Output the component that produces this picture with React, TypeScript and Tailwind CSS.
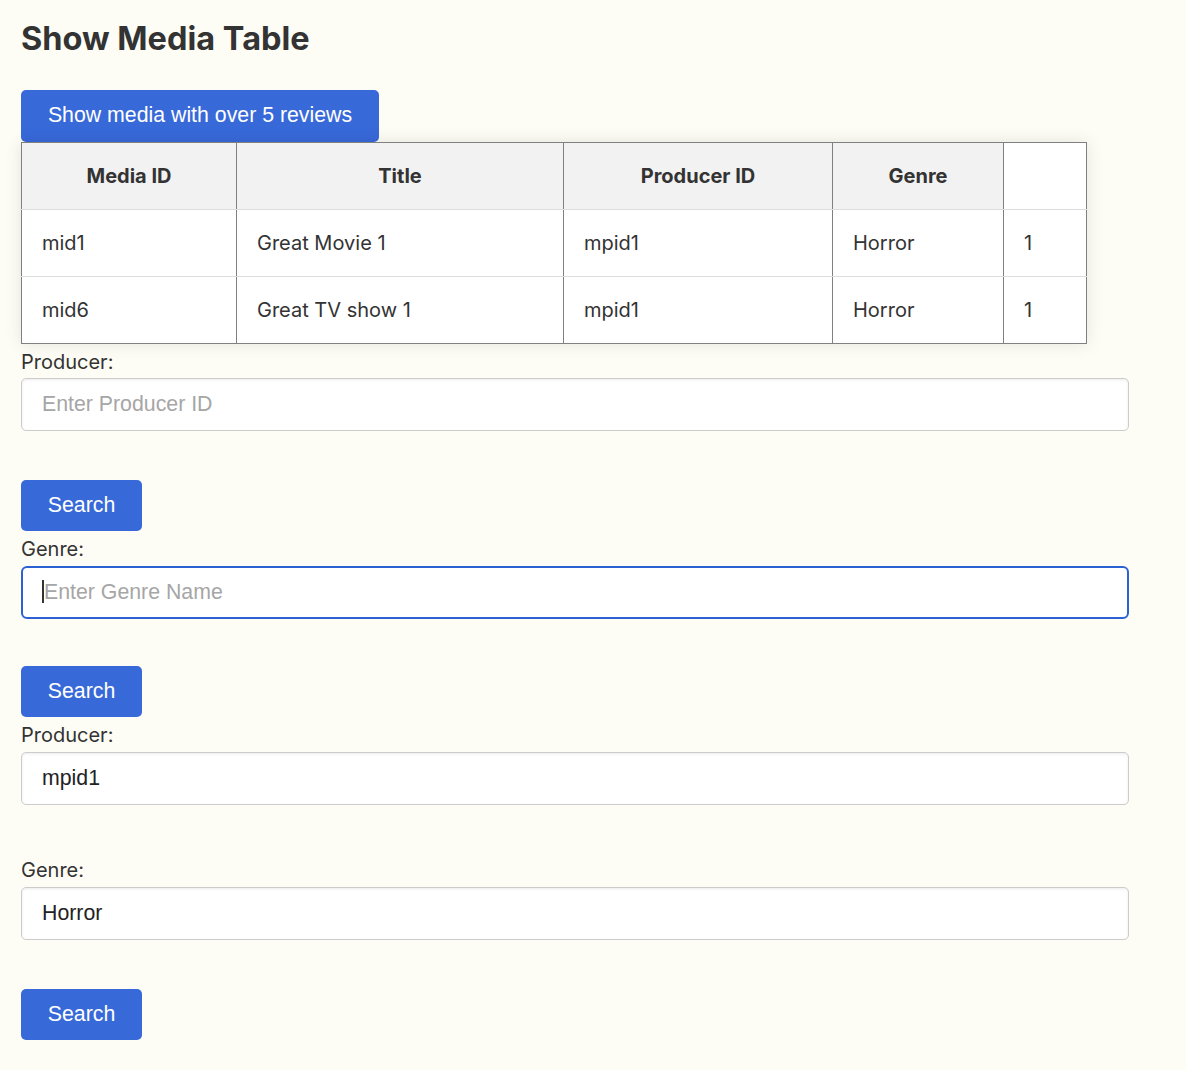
import React from "react";

const rows = [
  { id: "mid1", title: "Great Movie 1", pid: "mpid1", genre: "Horror", n: "1" },
  { id: "mid6", title: "Great TV show 1", pid: "mpid1", genre: "Horror", n: "1" },
];

const btn =
  "block rounded-[5px] bg-[#3869d9] text-white text-[21.3px] leading-none font-['Liberation_Sans',Arial,sans-serif]";
const inputCls =
  "block h-[53px] w-[1108px] rounded-[5px] border border-[#cccccc] bg-white px-[20px] text-[21.3px] text-[#222] font-['Liberation_Sans',Arial,sans-serif] shadow-[inset_0_1px_3px_rgba(0,0,0,0.08)] outline-none placeholder:text-[#a6a6a6]";
const labelCls = "block text-[20px] leading-6 text-[#333]";

export default function App() {
  return (
    <div className="min-h-screen bg-[#fdfdf5] px-[21px] pt-[19px] pb-[30px] font-['Inter',sans-serif] text-[#333]">
      <h1 className="text-[32.5px] font-bold leading-[39px] text-[#333]">Show Media Table</h1>
      <button className={`${btn} mt-[32px] h-[52px] w-[358px]`}>Show media with over 5 reviews</button>
      <table className="w-[1066px] border-collapse border border-[#808080] bg-white text-[20px] shadow-[0_0_16px_rgba(0,0,0,0.1)]">
        <thead>
          <tr>
            <th className="h-[67px] w-[215px] border border-b-[#dddddd] border-[#808080] bg-[#f2f2f2] text-center font-bold">Media ID</th>
            <th className="h-[67px] w-[327px] border border-b-[#dddddd] border-[#808080] bg-[#f2f2f2] text-center font-bold">Title</th>
            <th className="h-[67px] w-[269px] border border-b-[#dddddd] border-[#808080] bg-[#f2f2f2] text-center font-bold">Producer ID</th>
            <th className="h-[67px] w-[171px] border border-b-[#dddddd] border-[#808080] bg-[#f2f2f2] text-center font-bold">Genre</th>
            <td className="h-[67px] border border-b-[#dddddd] border-[#808080] bg-white"></td>
          </tr>
        </thead>
        <tbody>
          {rows.map((r, i) => (
            <tr key={i}>
              {[r.id, r.title, r.pid, r.genre, r.n].map((c, j) => (
                <td
                  key={j}
                  className={`h-[67px] border-l border-r border-l-[#808080] border-r-[#808080] px-[20px] text-left ${
                    i === 0 ? "border-b border-b-[#dddddd]" : "border-b border-b-[#808080]"
                  }`}
                >
                  {c}
                </td>
              ))}
            </tr>
          ))}
        </tbody>
      </table>

      <label className={`${labelCls} mt-[6px] mb-[4px]`}>Producer:</label>
      <input className={inputCls} placeholder="Enter Producer ID" readOnly />
      <button className={`${btn} mt-[49px] h-[51px] w-[121px]`}>Search</button>

      <label className={`${labelCls} mt-[6px] mb-[5px]`}>Genre:</label>
      <div className="relative w-[1108px]">
        <input
          className="block h-[53px] w-[1108px] rounded-[6px] border-2 border-[#2c61d3] bg-white px-[21px] text-[21.3px] text-[#222] font-['Liberation_Sans',Arial,sans-serif] outline-none placeholder:text-[#a6a6a6]"
          placeholder="Enter Genre Name"
          readOnly
        />
        <span className="pointer-events-none absolute left-[21px] top-[14px] h-[23px] w-[2px] bg-[#333]"></span>
      </div>
      <button className={`${btn} mt-[47px] h-[51px] w-[121px]`}>Search</button>

      <label className={`${labelCls} mt-[6px] mb-[5px]`}>Producer:</label>
      <input className={inputCls} defaultValue="mpid1" readOnly />

      <label className={`${labelCls} mt-[53px] mb-[5px]`}>Genre:</label>
      <input className={inputCls} defaultValue="Horror" readOnly />
      <button className={`${btn} mt-[49px] h-[51px] w-[121px]`}>Search</button>
    </div>
  );
}
